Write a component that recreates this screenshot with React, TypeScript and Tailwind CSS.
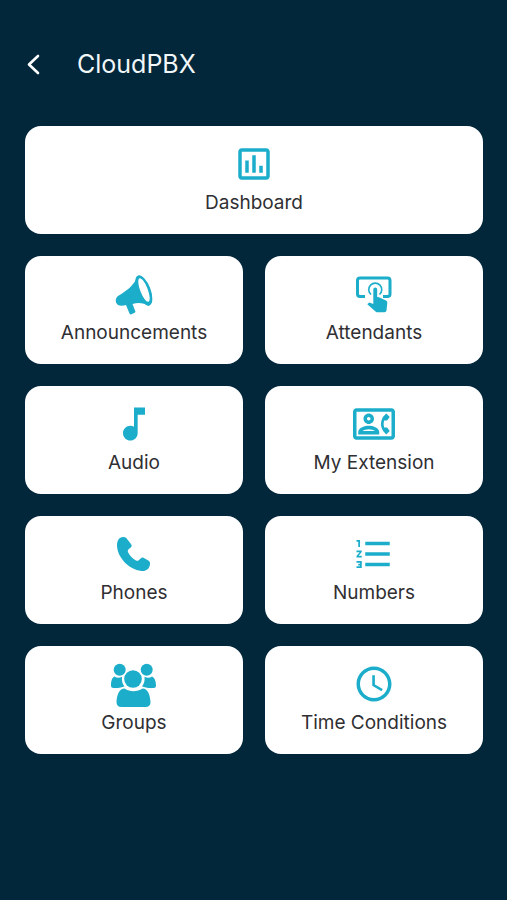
import type { ReactNode } from "react";
import {
  MdAccessTime,
  MdFormatListNumbered,
  MdMusicNote,
  MdOutlineContactPhone,
  MdOutlineInsertChart,
} from "react-icons/md";

function MegaphoneIcon() {
  return (
    <svg viewBox="0 0 48 48" className="size-12" fill="currentColor" aria-hidden="true">
      <path d="M27.500 6C25.500 13 18.500 20 8 26C5 28 5 33 8 35C10 36 13 36 16 35L19.500 43.500Q20.500 45 22 44L25 42.500Q26 42 25 40.500L22.500 34C28.500 32 34 33 39 36Z" />
      <ellipse cx="33.800" cy="20.500" rx="6.800" ry="16" transform="rotate(-21 33.8 20.5)" />
      <ellipse cx="34" cy="20" rx="3.800" ry="12.500" transform="rotate(-21 34 20)" fill="white" />
    </svg>
  );
}

function TouchIcon() {
  return (
    <svg viewBox="0 0 48 48" className="size-12" fill="none" stroke="currentColor" aria-hidden="true">
      <path d="M15 26.500H10Q7.500 26.500 7.500 24V10.500Q7.500 8 10 8H37.500Q40 8 40 10.500V24Q40 26.500 37.500 26.500H33" strokeWidth="3" />
      <path d="M21 24.500A6.500 6.500 0 1 1 29.500 24.500" strokeWidth="1.600" />
      <path
        d="M23.300 19.500Q23.300 17.500 25.200 17.500Q27.200 17.500 27.200 19.500V27L29 27.300L36 30.500Q37.500 31.300 37.300 33L36.500 40.500Q36.200 42.300 34.500 42.300H28Q26.500 42.300 25.500 41.400L17.300 34.200L18.600 32.900Q19.200 32.400 20 32.700L23.300 34Z"
        fill="currentColor"
        stroke="none"
      />
    </svg>
  );
}

function PhoneIcon() {
  return (
    <svg viewBox="0 0 48 48" className="size-12" fill="currentColor" aria-hidden="true">
      <path d="M11.500 7.200Q14.500 6.300 16.300 8L21.300 14.500Q22.300 16 21 17.200L18.300 19.500C17.500 20.500 17.700 21.500 18.300 22.800C20 26 22.500 28.500 25.500 30.300C27 31.200 28 31 29 30L31.200 27.900Q32.200 27.200 33.500 27.800L38.700 30.800Q40.500 32 40 34.500C39.200 39 36 41.500 31.500 41C18.500 39.500 7 27 7 15C7 11 8.500 8.200 11.500 7.200Z" />
    </svg>
  );
}

function GroupIcon() {
  return (
    <svg viewBox="0 0 48 48" className="size-12" fill="currentColor" aria-hidden="true">
      <circle cx="9.700" cy="9.700" r="6" />
      <circle cx="36.700" cy="9.700" r="6" />
      <circle cx="23" cy="19" r="8.800" />
      <path d="M4.500 16.500C6.500 18 9.500 18 12 16.800C11.500 21 12.500 24 14.500 26.500C11.500 27 9.500 28 8 28H3.500Q1 28 1 25.500C1 22 1.500 18 4.500 16.500Z" />
      <path d="M42 16.500C40 18 37 18 34.500 16.800C35 21 34 24 32 26.500C35 27 37 28 38.500 28H43.500Q46 28 46 25.500C46 22 45 18 42 16.500Z" />
      <path d="M14.500 28.500C20 32 27 32 32.500 28.500C37.500 28.500 40 34 40.500 42Q40.500 47 35.500 47H11.500Q6.500 47 6.500 42C7 34 9.500 28.500 14.500 28.500Z" />
    </svg>
  );
}

type Item = { label: string; icon: ReactNode; wide?: boolean };

const items: Item[] = [
  { label: "Dashboard", icon: <MdOutlineInsertChart size={42} />, wide: true },
  { label: "Announcements", icon: <MegaphoneIcon /> },
  { label: "Attendants", icon: <TouchIcon /> },
  { label: "Audio", icon: <MdMusicNote size={44} /> },
  { label: "My Extension", icon: <MdOutlineContactPhone size={42} /> },
  { label: "Phones", icon: <PhoneIcon /> },
  { label: "Numbers", icon: <MdFormatListNumbered size={42} /> },
  { label: "Groups", icon: <GroupIcon /> },
  { label: "Time Conditions", icon: <MdAccessTime size={42} /> },
];

export default function App() {
  return (
    <div className="min-h-screen bg-[#02263a] pt-11 pr-6 pb-8 pl-[25px] font-['Inter','Liberation_Sans',sans-serif]">
      <header className="flex h-10 items-center gap-9">
        <button type="button" aria-label="Back" className="text-white">
          <svg viewBox="0 0 16 24" className="h-6 w-4" fill="none" stroke="currentColor" strokeWidth="2.600" strokeLinecap="round" strokeLinejoin="round" aria-hidden="true">
            <path d="M13 4L4 12.500L13 21" />
          </svg>
        </button>
        <h1 className="text-[25px] leading-8 font-normal text-[#f1f6f8]">CloudPBX</h1>
      </header>
      <main className="mt-[42px] grid grid-cols-2 gap-[22px]">
        {items.map((item) => (
          <button
            key={item.label}
            type="button"
            className={`flex h-[108px] flex-col items-center rounded-2xl bg-white pt-3.5 ${item.wide ? "col-span-2" : ""}`}
          >
            <span className="flex size-12 items-center justify-center text-[#1badca]">{item.icon}</span>
            <span className="mt-[3px] text-[19px] leading-6 text-[#2f2f33]">{item.label}</span>
          </button>
        ))}
      </main>
    </div>
  );
}
